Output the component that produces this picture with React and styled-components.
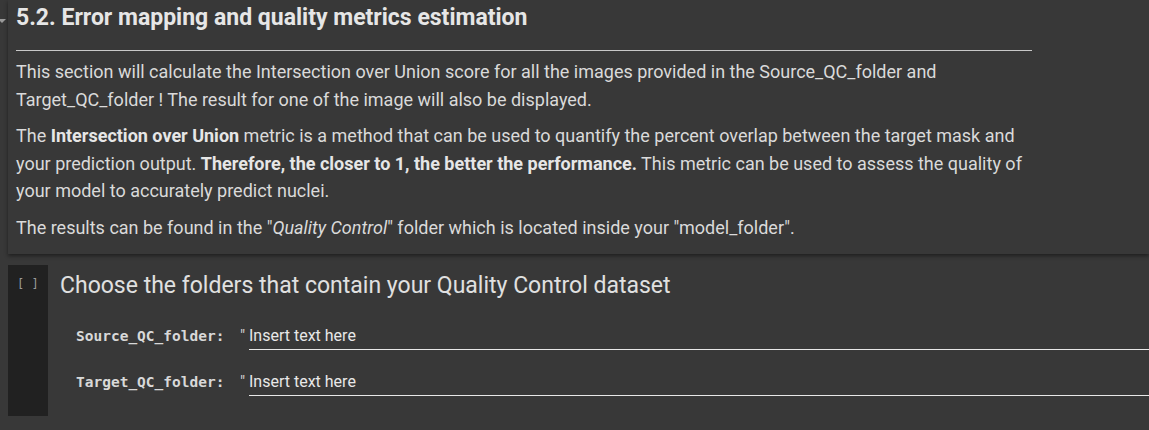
import React from "react";
import styled, { createGlobalStyle } from "styled-components";

const GlobalStyle = createGlobalStyle`
  html, body {
    margin: 0;
    padding: 0;
    background: #383838;
    font-family: Roboto, "Noto Sans", sans-serif;
    color: #e3e3e3;
  }
`;

const Page = styled.div`
  width: 1149px;
  height: 430px;
  overflow: hidden;
  position: relative;
  background: #383838;
`;

const TextCell = styled.section`
  margin-left: 8px;
  padding: 4px 117px 13px 8px;
  background: #383838;
  box-shadow: 0 2px 4px rgba(0, 0, 0, 0.45);
  position: relative;
`;

const Caret = styled.span`
  position: absolute;
  left: -10px;
  top: 19px;
  width: 0;
  height: 0;
  border-left: 4px solid transparent;
  border-right: 4px solid transparent;
  border-top: 4px solid #9a9a9a;
`;

const Heading = styled.h3`
  margin: 0;
  font-size: 23px;
  font-weight: 700;
  line-height: 28px;
  color: #e6e6e6;
  padding-bottom: 18px;
  border-bottom: 1px solid #c8c8c8;
`;

const Para = styled.p`
  margin: 9px 0 0;
  font-size: 18px;
  line-height: 27.5px;
  color: #dadada;

  &:first-of-type {
    margin-top: 7px;
  }
  b {
    font-weight: 700;
    color: #e6e6e6;
  }
`;

const CodeCell = styled.section`
  display: flex;
  margin: 11px 0 0 8px;
  height: 151px;
`;

const Gutter = styled.div`
  width: 40px;
  flex: none;
  background: #212121;
  color: #9a9a9a;
  font-family: "DejaVu Sans Mono", monospace;
  font-size: 12px;
  padding: 12px 0 0 9px;
  box-sizing: border-box;
  white-space: pre;
`;

const Form = styled.div`
  flex: 1;
  padding: 6px 0 0 12px;
`;

const FormTitle = styled.div`
  font-size: 23px;
  line-height: 30px;
  color: #e0e0e0;
  margin-bottom: 11px;
`;

const Row = styled.div`
  display: flex;
  align-items: baseline;
  height: 46px;
  padding: 14px 0 0 16px;
  box-sizing: border-box;
`;

const Label = styled.label`
  font-family: "DejaVu Sans Mono", monospace;
  font-weight: 700;
  font-size: 14.5px;
  color: #d8d8d8;
  width: 164px;
  flex: none;
`;

const Quote = styled.span`
  font-size: 16px;
  color: #d0d0d0;
  width: 9px;
  flex: none;
`;

const Input = styled.div`
  flex: 1;
  font-size: 16px;
  color: #e8e8e8;
  line-height: 20px;
  border-bottom: 1px solid #e8e8e8;
  padding-bottom: 3px;
`;

const fields = ["Source_QC_folder:", "Target_QC_folder:"];

export default function App() {
  return (
    <Page>
      <GlobalStyle />
      <TextCell>
        <Caret />
        <Heading>5.2. Error mapping and quality metrics estimation</Heading>
        <Para>
          This section will calculate the Intersection over Union score for all the images provided in the
          Source_QC_folder and Target_QC_folder ! The result for one of the image will also be displayed.
        </Para>
        <Para>
          The <b>Intersection over Union</b> metric is a method that can be used to quantify the percent overlap
          between the target mask and your prediction output. <b>Therefore, the closer to 1, the better the
          performance.</b> This metric can be used to assess the quality of your model to accurately predict nuclei.
        </Para>
        <Para>
          The results can be found in the "<i>Quality Control</i>" folder which is located inside your
          "model_folder".
        </Para>
      </TextCell>
      <CodeCell>
        <Gutter>{"[ ]"}</Gutter>
        <Form>
          <FormTitle>Choose the folders that contain your Quality Control dataset</FormTitle>
          {fields.map(f => (
            <Row key={f}>
              <Label>{f}</Label>
              <Quote>"</Quote>
              <Input>Insert text here</Input>
            </Row>
          ))}
        </Form>
      </CodeCell>
    </Page>
  );
}
